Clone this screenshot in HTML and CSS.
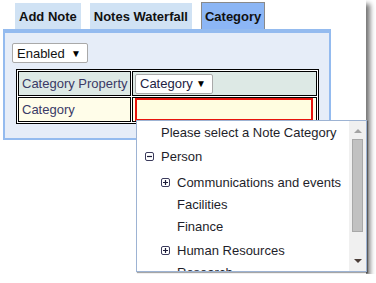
FILE: index.html
```html
<!DOCTYPE html>
<html lang="en">
<head>
    <meta charset="UTF-8">
    <meta name="viewport" content="width=device-width, initial-scale=1.0">
    <title>Category</title>
    <link rel="stylesheet" href="styles.css">
</head>
<body>

<div class="window">
    <div class="tabs">
        <div class="tab">Add Note</div>
        <div class="tab">Notes Waterfall</div>
        <div class="tab active">Category</div>
    </div>

    <div class="panel">
        <div class="select status">
            <span>Enabled</span>
            <span class="arrow">&#9660;</span>
        </div>

        <table class="props">
            <tr class="head-row">
                <td class="label">Category Property</td>
                <td>
                    <div class="select prop">
                        <span>Category</span>
                        <span class="arrow">&#9660;</span>
                    </div>
                </td>
            </tr>
            <tr class="value-row">
                <td class="label">Category</td>
                <td><div class="value-input"></div></td>
            </tr>
        </table>
    </div>

    <!-- Category picker dropdown -->
    <div class="dropdown">
        <ul class="tree">
            <li class="item hint">Please select a Note Category</li>
            <li class="item node level1">
                <svg class="toggle" width="9" height="9" viewBox="0 0 9 9"><rect x="0.5" y="0.5" width="8" height="8" rx="1.5" fill="#fff" stroke="#3b3b5c"/><path d="M2 4.5h5" stroke="#1d1d3a" stroke-width="1.2"/></svg>
                Person
            </li>
            <li class="item node level2 first">
                <svg class="toggle" width="9" height="9" viewBox="0 0 9 9"><rect x="0.5" y="0.5" width="8" height="8" rx="1.5" fill="#fff" stroke="#3b3b5c"/><path d="M2 4.5h5M4.5 2v5" stroke="#1d1d3a" stroke-width="1.2"/></svg>
                Communications and events
            </li>
            <li class="item leaf level2">Facilities</li>
            <li class="item leaf level2">Finance</li>
            <li class="item node level2 spaced">
                <svg class="toggle" width="9" height="9" viewBox="0 0 9 9"><rect x="0.5" y="0.5" width="8" height="8" rx="1.5" fill="#fff" stroke="#3b3b5c"/><path d="M2 4.5h5M4.5 2v5" stroke="#1d1d3a" stroke-width="1.2"/></svg>
                Human Resources
            </li>
            <li class="item leaf level2">Research</li>
        </ul>
        <div class="scrollbar">
            <span class="scroll-up"></span>
            <span class="thumb"></span>
            <span class="scroll-down"></span>
        </div>
    </div>
</div>

</body>
</html>
```

FILE: styles.css
```css
body {
    margin: 0;
    padding: 0;
    background-color: #fff;
    font-family: "Liberation Sans", Arial, sans-serif;
    font-size: 13px;
}
.window {
    position: relative;
    width: 366px;
    height: 274px;
    background-color: #fff;
    box-shadow: 4px 4px 5px rgba(0, 0, 0, 0.55);
    overflow: visible;
}
.tabs {
    display: flex;
    gap: 9px;
    padding: 3px 0 0 15px;
    height: 26px;
}
.tab {
    padding: 0 4px;
    height: 26px;
    line-height: 27px;
    background-color: #d0e2f4;
    color: #111;
    font-weight: bold;
    box-sizing: border-box;
}
.tab.active {
    margin-top: -1px;
    height: 27px;
    background-color: #8cb6f5;
    border: 1px solid #8a8a8a;
    border-bottom: none;
    padding: 0 3px;
}
.panel {
    margin-left: 3px;
    width: 328px;
    box-sizing: border-box;
    background-color: #e6edf8;
    border: 2px solid #94bbef;
    border-top-width: 4px;
    padding: 10px 0 14px 7px;
}
.select {
    display: flex;
    align-items: center;
    justify-content: space-between;
    box-sizing: border-box;
    height: 20px;
    background-color: #fff;
    border: 1px solid #a9a9a9;
    border-radius: 2px;
    color: #111;
    padding: 0 6px 0 4px;
}
.select .arrow {
    font-size: 10px;
    color: #000;
}
.status {
    width: 76px;
}
.prop {
    width: 78px;
    margin: 0 0 0 2px;
    color: #222244;
}
.props {
    margin: 6px 0 0 4px;
    width: 303px;
    border: 1px solid #000;
    border-spacing: 1px;
    background-color: #fff;
}
.props td {
    border: 1px solid #000;
    padding: 0;
    height: 23px;
}
.props .label {
    width: 108px;
    padding-left: 3px;
    color: #3a3a66;
}
.head-row td {
    background-color: #dde9e5;
}
.value-row td {
    background-color: #fffde9;
}
.value-input {
    margin: 0 3px 0 2px;
    height: 23px;
    box-sizing: border-box;
    border: 2px solid #e8140c;
    background-color: #fffde0;
}
.dropdown {
    position: absolute;
    left: 136px;
    top: 120px;
    width: 231px;
    height: 152px;
    box-sizing: border-box;
    border: 1px solid #9db3d3;
    box-shadow: 1px 1px 1px rgba(0, 0, 0, 0.35);
    background-color: #fff;
    display: flex;
    overflow: hidden;
}
.tree {
    flex: 1;
    list-style: none;
    margin: 0;
    padding: 0;
    color: #1e1e2a;
}
.item {
    display: flex;
    align-items: center;
    height: 22px;
    white-space: nowrap;
}
.hint {
    padding-left: 24px;
}
.level1 {
    margin-top: 2px;
    padding-left: 8px;
}
.level2 {
    padding-left: 24px;
}
.leaf {
    padding-left: 40px;
}
.first {
    margin-top: 4px;
}
.spaced {
    margin-top: 2px;
}
.toggle {
    margin-right: 7px;
    flex-shrink: 0;
}
.scrollbar {
    width: 17px;
    background-color: #f0f0f0;
    display: flex;
    flex-direction: column;
    align-items: center;
}
.scroll-up {
    margin-top: 8px;
    border-left: 4px solid transparent;
    border-right: 4px solid transparent;
    border-bottom: 4px solid #a3a3a3;
}
.thumb {
    margin-top: 6px;
    width: 11px;
    height: 93px;
    box-sizing: border-box;
    background-color: #c1c1c1;
    border: 1px solid #a8a8a8;
}
.scroll-down {
    margin-top: auto;
    margin-bottom: 8px;
    border-left: 4px solid transparent;
    border-right: 4px solid transparent;
    border-top: 4px solid #4a3d38;
}
```
